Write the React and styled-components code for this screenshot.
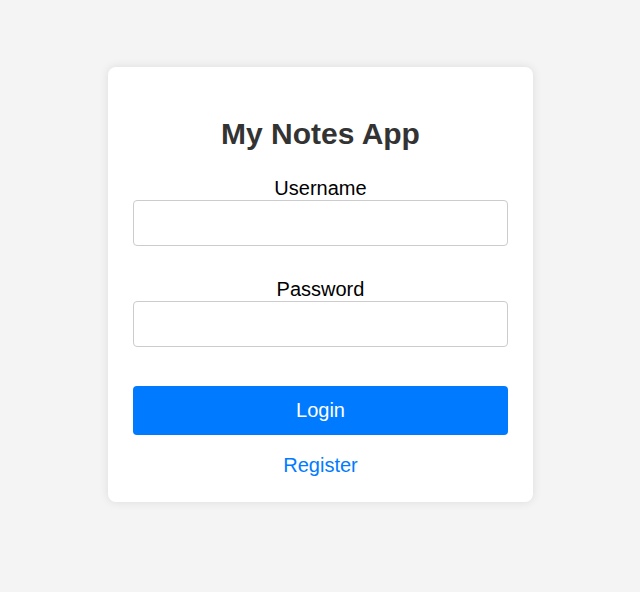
import React, { useState } from "react";
import styled, { createGlobalStyle } from "styled-components";

const GlobalStyle = createGlobalStyle`
  html, body {
    margin: 0;
    padding: 0;
    background: #f4f4f4;
    font-family: "Liberation Sans", Arial, sans-serif;
  }
`;

const Page = styled.div`
  display: flex;
  justify-content: center;
  align-items: flex-start;
  padding: 67px 0 0 1px;
  min-height: 592px;
  box-sizing: border-box;
`;

const Card = styled.div`
  width: 375px;
  padding: 25px 25px 25px;
  background: #fff;
  border-radius: 8px;
  box-shadow: 0 0 10px rgba(0, 0, 0, 0.1);
  text-align: center;
`;

const Title = styled.h1`
  margin: 25px 0 25px;
  font-size: 30px;
  line-height: 34px;
  font-weight: bold;
  color: #333;
`;

const Form = styled.form`
  display: flex;
  flex-direction: column;
`;

const Group = styled.div`
  display: flex;
  flex-direction: column;
  margin-bottom: ${(props) => props.gap}px;
`;

const Label = styled.label`
  font-size: 20px;
  line-height: 24px;
  color: #000;
`;

const Input = styled.input`
  box-sizing: border-box;
  width: 100%;
  height: 46px;
  padding: 10px;
  border: 1px solid #ccc;
  border-radius: 4px;
  font-size: 16px;
  font-family: inherit;
  outline: none;
`;

const Button = styled.button`
  height: 49px;
  width: 100%;
  border: none;
  border-radius: 4px;
  background: #007bff;
  color: #fff;
  font-size: 20px;
  font-family: inherit;
  cursor: pointer;
`;

const RegisterLink = styled.a`
  display: block;
  margin-top: 19px;
  font-size: 20px;
  line-height: 23px;
  color: #007bff;
  text-decoration: none;
`;

const App = () => {
  const [username, setUsername] = useState("");
  const [password, setPassword] = useState("");

  return (
    <>
      <GlobalStyle />
      <Page>
        <Card>
          <Title>My Notes App</Title>
          <Form onSubmit={(e) => e.preventDefault()}>
            <Group gap={31}>
              <Label htmlFor="username">Username</Label>
              <Input
                id="username"
                value={username}
                onChange={(e) => setUsername(e.target.value)}
              />
            </Group>
            <Group gap={39}>
              <Label htmlFor="password">Password</Label>
              <Input
                id="password"
                type="password"
                value={password}
                onChange={(e) => setPassword(e.target.value)}
              />
            </Group>
            <Button type="submit">Login</Button>
          </Form>
          <RegisterLink href="#">Register</RegisterLink>
        </Card>
      </Page>
    </>
  );
};

export default App;
